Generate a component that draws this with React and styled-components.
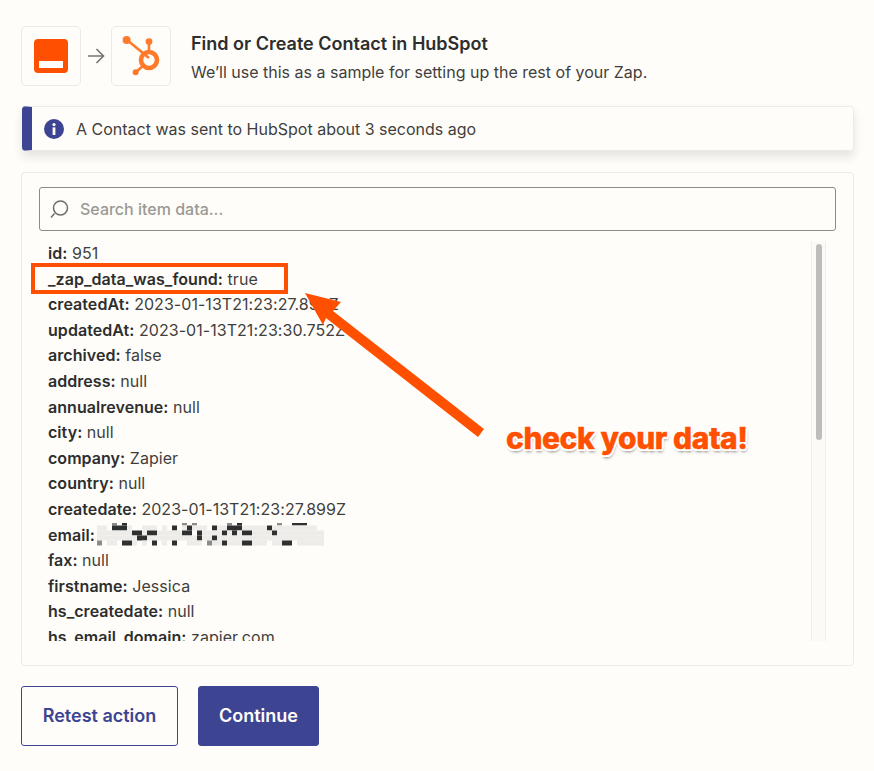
import React from "react";
import styled, { createGlobalStyle } from "styled-components";

const ROWS = [
  ["id", "951"],
  ["_zap_data_was_found", "true"],
  ["createdAt", "2023-01-13T21:23:27.899Z"],
  ["updatedAt", "2023-01-13T21:23:30.752Z"],
  ["archived", "false"],
  ["address", "null"],
  ["annualrevenue", "null"],
  ["city", "null"],
  ["company", "Zapier"],
  ["country", "null"],
  ["createdate", "2023-01-13T21:23:27.899Z"],
  ["email", null],
  ["fax", "null"],
  ["firstname", "Jessica"],
  ["hs_createdate", "null"],
  ["hs_email_domain", "zapier.com"],
];

// blurred email, one string per row of 5px cells
const MOSAIC = [
  { y: 0, h: 2.5, cells: "....g.d...........g.g......g.d.......g..ddd....." },
  { y: 2.5, h: 5, cells: ".ll.dddl..lll.l.d.ldlll.dlldddllllldlllllllll..." },
  { y: 7.5, h: 5, cells: ".lllllllddlddllllldd.dlllldldlddlllldllllllllll." },
  { y: 12.5, h: 5, cells: ".llllllllddlllllllllldlldllllllllllllllllllllll." },
  { y: 17.5, h: 5, cells: ".g.ll.ddl.l.d.l.d..lll.glldlllddlll.lldd.llllll." },
];

const SHADES = { l: "#eeece8", g: "#8c8b88", d: "#2f3030" };

const App = () => {
  return (
    <Page>
      <GlobalStyle />
      <Header>
        <IconBox>
          <svg width="34" height="34" viewBox="0 0 34 34">
            <rect width="34" height="34" rx="4" fill="#ff4f00" />
            <rect x="5" y="22" width="24" height="7" fill="#fffdf9" />
          </svg>
        </IconBox>
        <svg width="18" height="16" viewBox="0 0 18 16" fill="none" stroke="#77756f" strokeWidth="1.6">
          <path d="M1 8h15.5M9.5 1l7 7-7 7" />
        </svg>
        <IconBox>
          <svg width="60" height="60" viewBox="0 0 60 60" fill="none">
            <g stroke="#ff7a2b" strokeWidth="2.6">
              <path d="M16 14l22 18M38 16v12M25 46l8-7" />
              <circle cx="38" cy="34" r="8" strokeWidth="4.6" />
            </g>
            <g fill="#ff7a2b">
              <circle cx="15.6" cy="14" r="4" />
              <circle cx="38" cy="15.6" r="3.4" />
              <circle cx="24.6" cy="46.2" r="3" />
            </g>
          </svg>
        </IconBox>
        <HeaderText>
          <Title>Find or Create Contact in HubSpot</Title>
          <Subtitle>We’ll use this as a sample for setting up the rest of your Zap.</Subtitle>
        </HeaderText>
      </Header>

      <Banner>
        <svg width="20" height="20" viewBox="0 0 20 20">
          <circle cx="10" cy="10" r="10" fill="#3d4592" />
          <circle cx="10" cy="5.6" r="1.6" fill="#fffdf9" />
          <rect x="8.6" y="8.4" width="2.8" height="7.6" fill="#fffdf9" />
        </svg>
        A Contact was sent to HubSpot about 3 seconds ago
      </Banner>

      <Card>
        <Search>
          <svg width="20" height="22" viewBox="0 0 20 22" fill="none" stroke="#6e6c67" strokeWidth="1.5">
            <circle cx="11.5" cy="10" r="7" />
            <path d="M5.5 15.5L2 19.5" />
          </svg>
          Search item data...
        </Search>
        <List>
          <Rows>
            {ROWS.map(([key, value]) => (
              <Row key={key}>
                <b>{key}:</b>{" "}
                {value === null ? (
                  <Mosaic width="232" height="25" viewBox="0 0 232 25">
                    {MOSAIC.map((line) =>
                      [...line.cells].map((cell, i) =>
                        SHADES[cell] ? (
                          <rect key={`${line.y}-${i}`} x={i * 5} y={line.y} width="5" height={line.h} fill={SHADES[cell]} />
                        ) : null
                      )
                    )}
                  </Mosaic>
                ) : (
                  value
                )}
              </Row>
            ))}
          </Rows>
          <Track>
            <Thumb />
          </Track>
        </List>
      </Card>

      <Buttons>
        <OutlineButton>Retest action</OutlineButton>
        <SolidButton>Continue</SolidButton>
      </Buttons>

      <Highlight />
      <Arrow width="874" height="771" viewBox="0 0 874 771">
        <polygon points="305,293 341,302 333,311 484,429 478,437 326,318 323,325" fill="#ff4f00" />
      </Arrow>
      <Callout>check your data!</Callout>
    </Page>
  );
};

const GlobalStyle = createGlobalStyle`
  body {
    margin: 0;
    background: #fffdf9;
    font-family: Inter, "Liberation Sans", sans-serif;
    color: #2d2e2e;
  }
`;

const Page = styled.div`
  position: relative;
  width: 874px;
  height: 771px;
  box-sizing: border-box;
  padding: 26px 20px 0 21px;
  overflow: hidden;
`;

const Header = styled.div`
  display: flex;
  align-items: center;
  gap: 6px;
  height: 60px;
`;

const IconBox = styled.div`
  display: flex;
  align-items: center;
  justify-content: center;
  width: 60px;
  height: 60px;
  box-sizing: border-box;
  border: 1px solid #ecebe6;
  border-radius: 5px;
  svg {
    flex: none;
  }
`;

const HeaderText = styled.div`
  margin-left: 14px;
  padding-top: 4px;
`;

const Title = styled.div`
  font-size: 18px;
  font-weight: 600;
  line-height: 24px;
`;

const Subtitle = styled.div`
  margin-top: 4px;
  font-size: 16px;
  line-height: 24px;
  color: #3f3f3d;
`;

const Banner = styled.div`
  display: flex;
  align-items: center;
  gap: 12px;
  height: 45px;
  margin: 20px 0 21px 1px;
  box-sizing: border-box;
  padding-left: 12px;
  border: 1px solid #ecebe6;
  border-left: 10px solid #3d4592;
  border-radius: 4px;
  font-size: 16px;
  color: #3f3f3d;
  box-shadow: 0 6px 10px rgba(45, 46, 46, 0.12);
`;

const Card = styled.div`
  height: 494px;
  box-sizing: border-box;
  padding: 14px 17px 0;
  border: 1px solid #ecebe6;
  border-radius: 4px;
`;

const Search = styled.div`
  display: flex;
  align-items: center;
  gap: 11px;
  height: 44px;
  box-sizing: border-box;
  padding-left: 9px;
  border: 1px solid #8c8b86;
  border-radius: 3px;
  font-size: 16px;
  font-weight: 500;
  color: #9a9994;
`;

const List = styled.div`
  display: flex;
  height: 400px;
  margin-top: 10px;
`;

const Rows = styled.div`
  flex: 1;
  min-width: 0;
  padding-left: 9px;
  overflow: hidden;
`;

const Row = styled.div`
  font-size: 16px;
  line-height: 25.6px;
  letter-spacing: 0.05px;
  white-space: nowrap;
  color: #3f3f3d;
  b {
    font-weight: 600;
    color: #2d2e2e;
  }
`;

const Mosaic = styled.svg`
  vertical-align: top;
  margin-left: -7px;
`;

const Track = styled.div`
  width: 15px;
  margin-right: 10px;
  box-sizing: border-box;
  padding: 3px 3px 0 4px;
  border-left: 1px solid #f0efeb;
  border-right: 1px solid #f0efeb;
  background: #fbfaf7;
`;

const Thumb = styled.div`
  height: 196px;
  border-radius: 4px;
  background: #bdbdbb;
`;

const Buttons = styled.div`
  display: flex;
  gap: 20px;
  margin-top: 20px;
`;

const OutlineButton = styled.button`
  width: 157px;
  height: 60px;
  padding: 0 0 2px;
  border: 1.5px solid #3d4592;
  border-radius: 3px;
  background: transparent;
  color: #3d4592;
  font: 600 18px Inter, "Liberation Sans", sans-serif;
`;

const SolidButton = styled(OutlineButton)`
  width: 121px;
  background: #3d4592;
  color: #fffdf9;
`;

const Highlight = styled.div`
  position: absolute;
  left: 31px;
  top: 263px;
  width: 257px;
  height: 31px;
  box-sizing: border-box;
  border: 4px solid #ff4f00;
`;

const Arrow = styled.svg`
  position: absolute;
  left: 0;
  top: 0;
  pointer-events: none;
`;

const Callout = styled.div`
  position: absolute;
  left: 506px;
  top: 419px;
  font-size: 30px;
  line-height: 38px;
  font-weight: 800;
  letter-spacing: -0.45px;
  white-space: nowrap;
  color: #ff4f00;
  -webkit-text-stroke: 0.4px #ff4f00;
  text-shadow:
    2px 0 0 #fff, -2px 0 0 #fff, 0 2px 0 #fff, 0 -2px 0 #fff,
    1.5px 1.5px 0 #fff, -1.5px 1.5px 0 #fff, 1.5px -1.5px 0 #fff, -1.5px -1.5px 0 #fff,
    1px 3px 3px rgba(0, 0, 0, 0.45);
`;

export default App;
